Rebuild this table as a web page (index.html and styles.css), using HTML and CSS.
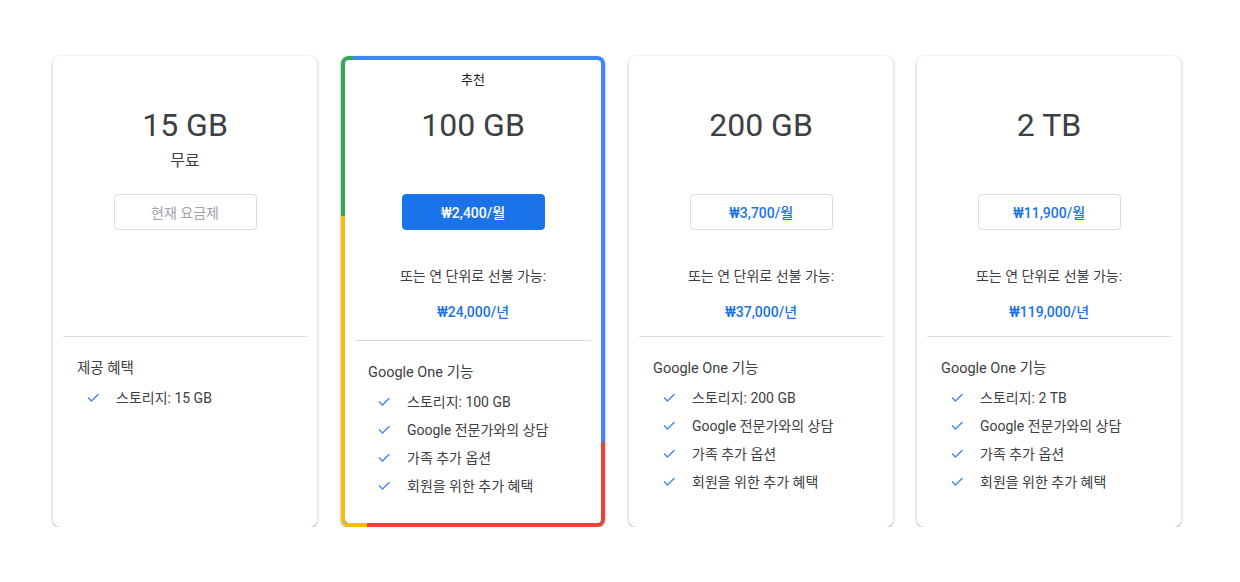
FILE: index.html
```html
<!DOCTYPE html>
<html lang="ko">
<head>
  <meta charset="UTF-8">
  <meta name="viewport" content="width=device-width, initial-scale=1.0">
  <title>Google One 요금제</title>
  <link rel="stylesheet" href="styles.css">
</head>
<body>
  <div class="plans">

    <!-- 15 GB -->
    <div class="plan">
      <div class="plan-inner">
        <div class="plan-label"></div>
        <h2 class="plan-size">15 GB</h2>
        <div class="plan-sub">무료</div>
        <button class="plan-btn current">현재 요금제</button>
        <div class="plan-year"></div>
        <hr class="plan-divider">
        <div class="plan-features">
          <h3>제공 혜택</h3>
          <ul>
            <li><svg class="check" viewBox="0 0 14 14"><polyline points="2,7.5 5.5,11 12.5,4"/></svg>스토리지: 15 GB</li>
          </ul>
        </div>
      </div>
    </div>

    <!-- 100 GB (추천) -->
    <div class="plan recommended">
      <div class="plan-inner">
        <div class="plan-label">추천</div>
        <h2 class="plan-size">100 GB</h2>
        <div class="plan-sub"></div>
        <button class="plan-btn primary">₩2,400/월</button>
        <div class="plan-year">
          <p>또는 연 단위로 선불 가능:</p>
          <p class="year-price">₩24,000/년</p>
        </div>
        <hr class="plan-divider">
        <div class="plan-features">
          <h3>Google One 기능</h3>
          <ul>
            <li><svg class="check" viewBox="0 0 14 14"><polyline points="2,7.5 5.5,11 12.5,4"/></svg>스토리지: 100 GB</li>
            <li><svg class="check" viewBox="0 0 14 14"><polyline points="2,7.5 5.5,11 12.5,4"/></svg>Google 전문가와의 상담</li>
            <li><svg class="check" viewBox="0 0 14 14"><polyline points="2,7.5 5.5,11 12.5,4"/></svg>가족 추가 옵션</li>
            <li><svg class="check" viewBox="0 0 14 14"><polyline points="2,7.5 5.5,11 12.5,4"/></svg>회원을 위한 추가 혜택</li>
          </ul>
        </div>
      </div>
    </div>

    <!-- 200 GB -->
    <div class="plan">
      <div class="plan-inner">
        <div class="plan-label"></div>
        <h2 class="plan-size">200 GB</h2>
        <div class="plan-sub"></div>
        <button class="plan-btn">₩3,700/월</button>
        <div class="plan-year">
          <p>또는 연 단위로 선불 가능:</p>
          <p class="year-price">₩37,000/년</p>
        </div>
        <hr class="plan-divider">
        <div class="plan-features">
          <h3>Google One 기능</h3>
          <ul>
            <li><svg class="check" viewBox="0 0 14 14"><polyline points="2,7.5 5.5,11 12.5,4"/></svg>스토리지: 200 GB</li>
            <li><svg class="check" viewBox="0 0 14 14"><polyline points="2,7.5 5.5,11 12.5,4"/></svg>Google 전문가와의 상담</li>
            <li><svg class="check" viewBox="0 0 14 14"><polyline points="2,7.5 5.5,11 12.5,4"/></svg>가족 추가 옵션</li>
            <li><svg class="check" viewBox="0 0 14 14"><polyline points="2,7.5 5.5,11 12.5,4"/></svg>회원을 위한 추가 혜택</li>
          </ul>
        </div>
      </div>
    </div>

    <!-- 2 TB -->
    <div class="plan">
      <div class="plan-inner">
        <div class="plan-label"></div>
        <h2 class="plan-size">2 TB</h2>
        <div class="plan-sub"></div>
        <button class="plan-btn">₩11,900/월</button>
        <div class="plan-year">
          <p>또는 연 단위로 선불 가능:</p>
          <p class="year-price">₩119,000/년</p>
        </div>
        <hr class="plan-divider">
        <div class="plan-features">
          <h3>Google One 기능</h3>
          <ul>
            <li><svg class="check" viewBox="0 0 14 14"><polyline points="2,7.5 5.5,11 12.5,4"/></svg>스토리지: 2 TB</li>
            <li><svg class="check" viewBox="0 0 14 14"><polyline points="2,7.5 5.5,11 12.5,4"/></svg>Google 전문가와의 상담</li>
            <li><svg class="check" viewBox="0 0 14 14"><polyline points="2,7.5 5.5,11 12.5,4"/></svg>가족 추가 옵션</li>
            <li><svg class="check" viewBox="0 0 14 14"><polyline points="2,7.5 5.5,11 12.5,4"/></svg>회원을 위한 추가 혜택</li>
          </ul>
        </div>
      </div>
    </div>

  </div>
</body>
</html>
```

FILE: styles.css
```css
body {
  font-family: Roboto, "Noto Sans CJK KR", sans-serif;
  background: #fff;
  color: #3c4043;
  margin: 0;
  padding: 0;
}

.plans {
  display: flex;
  gap: 24px;
  padding: 56px 0 0 53px;
}

.plan {
  box-sizing: border-box;
  width: 264px;
  height: 471px;
  border-radius: 8px;
  background: #fff;
  box-shadow: 0 1px 2px rgba(60, 64, 67, 0.3), 0 1px 3px 1px rgba(60, 64, 67, 0.15);
  text-align: center;
}

.plan-inner {
  height: 100%;
  box-sizing: border-box;
  padding: 12px 10px 0;
  background: #fff;
  border-radius: 8px;
}

/* coloured frame for the recommended plan */
.recommended {
  padding: 4px;
  background:
    linear-gradient(#34a853, #34a853) left top / 12px 4px no-repeat,
    linear-gradient(#fbbc04, #fbbc04) left bottom / 26px 4px no-repeat,
    linear-gradient(#ea4335, #ea4335) right bottom / 4px 85px no-repeat,
    linear-gradient(#ea4335, #ea4335) left bottom / 100% 4px no-repeat,
    linear-gradient(#fbbc04, #fbbc04) left bottom / 4px 311px no-repeat,
    linear-gradient(#34a853, #34a853) left top / 4px 100% no-repeat,
    #4285f4;
}

.recommended .plan-inner {
  padding: 8px 10px 0;
  border-radius: 4px;
}

.plan-label {
  height: 24px;
  line-height: 24px;
  font-size: 13px;
  color: #202124;
}

.plan-size {
  margin: 13px 0 0;
  font-size: 32px;
  line-height: 40px;
  font-weight: 400;
  color: #3c4043;
}

.plan-sub {
  margin-top: 4px;
  height: 24px;
  line-height: 24px;
  font-size: 16px;
  color: #3c4043;
}

.plan-btn {
  display: block;
  margin: 21px auto 0;
  width: 143px;
  height: 36px;
  box-sizing: border-box;
  border: 1px solid #dadce0;
  border-radius: 4px;
  background: #fff;
  font-family: inherit;
  font-size: 14px;
  font-weight: 500;
  color: #1a73e8;
}

.plan-btn.primary {
  background: #1a73e8;
  border-color: #1a73e8;
  color: #fff;
}

.plan-btn.current {
  font-weight: 400;
  color: #a0a4a8;
}

.plan-year {
  box-sizing: border-box;
  height: 106px;
  padding-top: 36px;
}

.recommended .plan-year {
  height: 110px;
}

.plan-year p {
  margin: 0;
  font-size: 14px;
  line-height: 20px;
}

.plan-year .year-price {
  margin-top: 16px;
  color: #1a73e8;
  font-weight: 500;
}

.plan-divider {
  margin: 0;
  border: 0;
  border-top: 1px solid #dadce0;
}

.plan-features {
  text-align: left;
  padding: 22px 0 0 14px;
}

.recommended .plan-features {
  padding-left: 13px;
}

.plan-features h3 {
  margin: 0 0 4px;
  font-size: 14.5px;
  line-height: 20px;
  font-weight: 400;
  color: #3c4043;
}

.plan-features ul {
  list-style: none;
  margin: 0;
  padding: 0;
}

.plan-features li {
  display: flex;
  align-items: center;
  height: 28px;
  font-size: 14px;
  color: #3c4043;
}

.check {
  width: 14px;
  height: 14px;
  margin: 0 16px 0 9px;
  fill: none;
  stroke: #4285f4;
  stroke-width: 1.4;
}
```
